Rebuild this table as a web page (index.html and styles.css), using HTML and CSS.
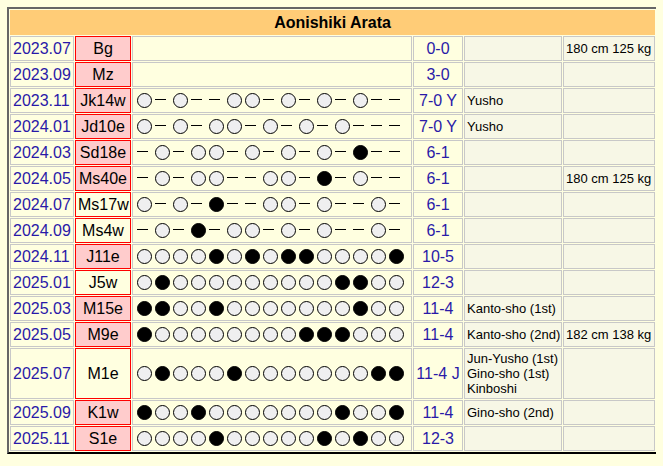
FILE: index.html
```html
<!DOCTYPE html>
<html>
<head>
<meta charset="utf-8">
<link rel="stylesheet" href="styles.css">
</head>
<body>
<table class="rk">
<colgroup><col class="c1"><col class="c2"><col class="c3"><col class="c4"><col class="c5"><col class="c6"></colgroup>
<tr><th class="hd" colspan="6">Aonishiki Arata</th></tr>
<tr><td class="dt">2023.07</td><td class="rank pink">Bg</td><td class="bouts"></td><td class="rec">0-0</td><td class="prz"></td><td class="prz">180 cm 125 kg</td></tr>
<tr><td class="dt">2023.09</td><td class="rank pink">Mz</td><td class="bouts"></td><td class="rec">3-0</td><td class="prz"></td><td class="prz"></td></tr>
<tr><td class="dt">2023.11</td><td class="rank pink">Jk14w</td><td class="bouts"><div class="sl"><i class="w"></i><i class="d"></i><i class="w"></i><i class="d"></i><i class="d"></i><i class="w"></i><i class="w"></i><i class="d"></i><i class="w"></i><i class="d"></i><i class="w"></i><i class="d"></i><i class="w"></i><i class="d"></i><i class="d"></i></div></td><td class="rec">7-0 Y</td><td class="prz">Yusho</td><td class="prz"></td></tr>
<tr><td class="dt">2024.01</td><td class="rank pink">Jd10e</td><td class="bouts"><div class="sl"><i class="w"></i><i class="d"></i><i class="w"></i><i class="d"></i><i class="w"></i><i class="w"></i><i class="d"></i><i class="w"></i><i class="d"></i><i class="w"></i><i class="d"></i><i class="w"></i><i class="d"></i><i class="d"></i><i class="d"></i></div></td><td class="rec">7-0 Y</td><td class="prz">Yusho</td><td class="prz"></td></tr>
<tr><td class="dt">2024.03</td><td class="rank pink">Sd18e</td><td class="bouts"><div class="sl"><i class="d"></i><i class="w"></i><i class="d"></i><i class="w"></i><i class="w"></i><i class="d"></i><i class="w"></i><i class="d"></i><i class="w"></i><i class="d"></i><i class="w"></i><i class="d"></i><i class="b"></i><i class="d"></i><i class="d"></i></div></td><td class="rec">6-1</td><td class="prz"></td><td class="prz"></td></tr>
<tr><td class="dt">2024.05</td><td class="rank pink">Ms40e</td><td class="bouts"><div class="sl"><i class="d"></i><i class="w"></i><i class="d"></i><i class="w"></i><i class="w"></i><i class="d"></i><i class="d"></i><i class="w"></i><i class="w"></i><i class="d"></i><i class="b"></i><i class="d"></i><i class="w"></i><i class="d"></i><i class="d"></i></div></td><td class="rec">6-1</td><td class="prz"></td><td class="prz">180 cm 125 kg</td></tr>
<tr><td class="dt">2024.07</td><td class="rank">Ms17w</td><td class="bouts"><div class="sl"><i class="w"></i><i class="d"></i><i class="w"></i><i class="d"></i><i class="b"></i><i class="d"></i><i class="d"></i><i class="w"></i><i class="w"></i><i class="d"></i><i class="w"></i><i class="d"></i><i class="d"></i><i class="w"></i><i class="d"></i></div></td><td class="rec">6-1</td><td class="prz"></td><td class="prz"></td></tr>
<tr><td class="dt">2024.09</td><td class="rank">Ms4w</td><td class="bouts"><div class="sl"><i class="d"></i><i class="w"></i><i class="d"></i><i class="b"></i><i class="d"></i><i class="w"></i><i class="w"></i><i class="d"></i><i class="w"></i><i class="d"></i><i class="w"></i><i class="d"></i><i class="d"></i><i class="w"></i><i class="d"></i></div></td><td class="rec">6-1</td><td class="prz"></td><td class="prz"></td></tr>
<tr><td class="dt">2024.11</td><td class="rank pink">J11e</td><td class="bouts"><div class="sl"><i class="w"></i><i class="w"></i><i class="w"></i><i class="w"></i><i class="b"></i><i class="w"></i><i class="b"></i><i class="w"></i><i class="b"></i><i class="b"></i><i class="w"></i><i class="w"></i><i class="w"></i><i class="w"></i><i class="b"></i></div></td><td class="rec">10-5</td><td class="prz"></td><td class="prz"></td></tr>
<tr><td class="dt">2025.01</td><td class="rank">J5w</td><td class="bouts"><div class="sl"><i class="w"></i><i class="b"></i><i class="w"></i><i class="w"></i><i class="w"></i><i class="w"></i><i class="w"></i><i class="w"></i><i class="w"></i><i class="w"></i><i class="w"></i><i class="b"></i><i class="b"></i><i class="w"></i><i class="w"></i></div></td><td class="rec">12-3</td><td class="prz"></td><td class="prz"></td></tr>
<tr><td class="dt">2025.03</td><td class="rank pink">M15e</td><td class="bouts"><div class="sl"><i class="b"></i><i class="b"></i><i class="w"></i><i class="w"></i><i class="b"></i><i class="w"></i><i class="w"></i><i class="w"></i><i class="w"></i><i class="w"></i><i class="w"></i><i class="w"></i><i class="b"></i><i class="w"></i><i class="w"></i></div></td><td class="rec">11-4</td><td class="prz">Kanto-sho (1st)</td><td class="prz"></td></tr>
<tr><td class="dt">2025.05</td><td class="rank pink">M9e</td><td class="bouts"><div class="sl"><i class="b"></i><i class="w"></i><i class="w"></i><i class="w"></i><i class="w"></i><i class="w"></i><i class="w"></i><i class="w"></i><i class="w"></i><i class="b"></i><i class="b"></i><i class="b"></i><i class="w"></i><i class="w"></i><i class="w"></i></div></td><td class="rec">11-4</td><td class="prz">Kanto-sho (2nd)</td><td class="prz">182 cm 138 kg</td></tr>
<tr><td class="dt">2025.07</td><td class="rank">M1e</td><td class="bouts"><div class="sl"><i class="w"></i><i class="b"></i><i class="w"></i><i class="w"></i><i class="w"></i><i class="b"></i><i class="w"></i><i class="w"></i><i class="w"></i><i class="w"></i><i class="w"></i><i class="w"></i><i class="w"></i><i class="b"></i><i class="b"></i></div></td><td class="rec">11-4 J</td><td class="prz">Jun-Yusho (1st)<br>Gino-sho (1st)<br>Kinboshi</td><td class="prz"></td></tr>
<tr><td class="dt">2025.09</td><td class="rank pink">K1w</td><td class="bouts"><div class="sl"><i class="b"></i><i class="w"></i><i class="w"></i><i class="b"></i><i class="w"></i><i class="w"></i><i class="w"></i><i class="w"></i><i class="w"></i><i class="w"></i><i class="w"></i><i class="b"></i><i class="w"></i><i class="w"></i><i class="b"></i></div></td><td class="rec">11-4</td><td class="prz">Gino-sho (2nd)</td><td class="prz"></td></tr>
<tr><td class="dt">2025.11</td><td class="rank pink">S1e</td><td class="bouts"><div class="sl"><i class="w"></i><i class="w"></i><i class="w"></i><i class="w"></i><i class="b"></i><i class="w"></i><i class="w"></i><i class="w"></i><i class="w"></i><i class="w"></i><i class="b"></i><i class="w"></i><i class="b"></i><i class="w"></i><i class="w"></i></div></td><td class="rec">12-3</td><td class="prz"></td><td class="prz"></td></tr>
</table>
</body>
</html>
```
FILE: styles.css
```css
body {
  margin: 7px;
  background: #ffffe0;
  font-family: "Liberation Sans", Arial, sans-serif;
  font-size: 16px;
  color: #000;
}
.rk {
  border-collapse: separate;
  border-spacing: 1px;
  border-style: solid;
  border-width: 2px;
  border-color: #666666 #000000 #000000 #666666;
  width: 651px;
  table-layout: fixed;
}
.c1 { width: 64px; }
.c2 { width: 56px; }
.c3 { width: 280px; }
.c4 { width: 50px; }
.c5 { width: 98px; }
.c6 { width: 92px; }
.hd {
  background: #ffcc77;
  border: 1px solid #ffcc77;
  padding: 2px;
  line-height: 19px;
  font-weight: bold;
  font-size: 16px;
  text-align: center;
}
td {
  border: 1px solid #c8c8c8;
  padding: 2px;
  line-height: 19px;
  vertical-align: middle;
  background: #ffffe0;
  white-space: nowrap;
}
.dt { color: #2a1aa8; text-align: left; }
.rank { text-align: center; border-color: #ff0000; }
.pink { background: #ffcccc; }
.bouts { padding-left: 4px; }
.rec { color: #2a1aa8; text-align: center; }
.prz {
  background: #f7f7e6;
  font-size: 13px;
  line-height: 15px;
}
.sl {
  display: flex;
  gap: 3px;
  height: 15px;
  align-items: center;
}
.sl i {
  display: block;
  width: 15px;
  height: 15px;
  box-sizing: border-box;
  flex: none;
  position: relative;
}
.sl .w {
  border: 1px solid #000;
  border-radius: 50%;
  background: #efeff0;
}
.sl .b {
  border: 1px solid #000;
  border-radius: 50%;
  background: #000;
}
.sl .d::before {
  content: "";
  position: absolute;
  left: 0;
  top: 6px;
  width: 11px;
  height: 1px;
  background: #000;
}
```
